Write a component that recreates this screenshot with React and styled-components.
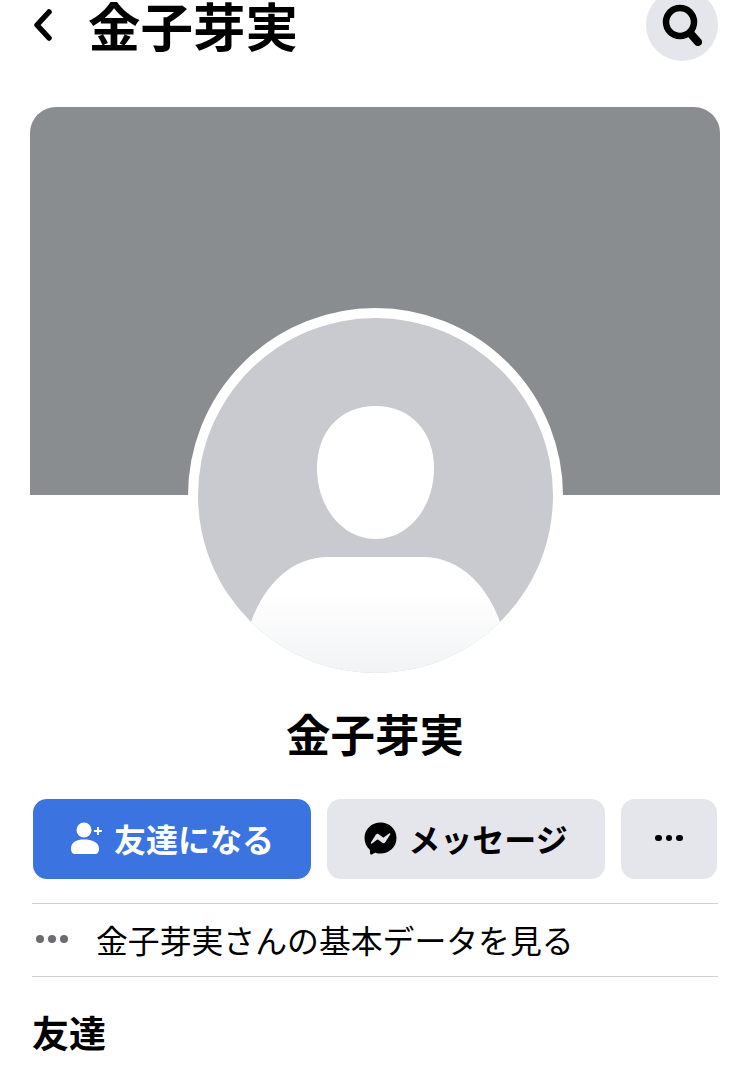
import React from 'react'
import styled, { createGlobalStyle } from 'styled-components'
import { FaFacebookMessenger } from 'react-icons/fa'

const GlobalStyle = createGlobalStyle`
  html, body {
    margin: 0;
    padding: 0;
    background: #fff;
    overflow: hidden;
  }
  body {
    font-family: "Noto Sans CJK JP", "Liberation Sans", sans-serif;
    color: #000;
  }
`

const Page = styled.div`
  width: 750px;
  height: 1084px;
  overflow: hidden;
`
const Header = styled.header`
  display: flex;
  align-items: flex-start;
  height: 61px;
  padding: 0 32px 0 33px;
`
const BackIcon = styled.svg`
  width: 19px;
  height: 32px;
  margin: 9px 36px 0 0;
`
const Title = styled.h1`
  flex: 1;
  margin: -2px 0 0;
  font-size: 52.5px;
  line-height: 52px;
  font-weight: 700;
`
const SearchButton = styled.button`
  display: flex;
  align-items: center;
  justify-content: center;
  width: 72px;
  height: 72px;
  margin-top: -11px;
  padding: 0;
  border: 0;
  border-radius: 50%;
  background: #e4e6eb;
`
const Cover = styled.div`
  height: 388px;
  margin: 46px 30px 0;
  border-radius: 26px 26px 0 0;
  background: #8a8d90;
`
const AvatarRing = styled.div`
  width: 355px;
  height: 355px;
  margin: -187px auto 0;
  border: 10px solid #fff;
  border-radius: 50%;
  background: #fff;
  position: relative;
`
const AvatarArt = styled.svg`
  display: block;
  width: 355px;
  height: 355px;
`
const Name = styled.h2`
  margin: 20px 0 0;
  text-align: center;
  font-size: 44.5px;
  line-height: 60px;
  font-weight: 700;
`
const Actions = styled.div`
  display: flex;
  gap: 16px;
  margin: 36px 33px 0;
`
const ActionButton = styled.button`
  display: flex;
  align-items: center;
  justify-content: center;
  gap: ${({ $gap }) => $gap || 12}px;
  width: ${({ $width }) => $width}px;
  height: 80px;
  padding: 0 0 2px;
  border: 0;
  border-radius: 14px;
  background: ${({ $primary }) => ($primary ? '#3b73e0' : '#e4e6eb')};
  color: ${({ $primary }) => ($primary ? '#fff' : '#000')};
  font-family: inherit;
  font-size: 32px;
  font-weight: 700;
  line-height: 1;
  svg {
    flex: none;
  }
`
const MoreDots = styled.span`
  display: flex;
  gap: 4px;
`
const Dot = styled.i`
  display: block;
  width: ${({ $size }) => $size}px;
  height: ${({ $size }) => $size}px;
  border-radius: 50%;
  background: ${({ $color }) => $color};
`
const InfoRow = styled.div`
  display: flex;
  align-items: center;
  gap: 28px;
  height: 69px;
  margin: 24px 32px 0;
  padding: 0 0 3px 4px;
  border-top: 1px solid #cfcfd1;
  border-bottom: 1px solid #cfcfd1;
  font-size: 31.85px;
  font-weight: 400;
  white-space: nowrap;
`
const InfoDots = styled.span`
  display: flex;
  gap: 4px;
`
const SectionTitle = styled.h3`
  margin: 30px 0 0 32px;
  font-size: 37px;
  line-height: 50px;
  font-weight: 700;
`

function BackChevron() {
  return (
    <BackIcon viewBox="0 0 19 32">
      <path d="M16 3 L4 16 L16 29" fill="none" stroke="#000" strokeWidth="5.5" strokeLinecap="round" strokeLinejoin="round" />
    </BackIcon>
  )
}

function SearchGlyph() {
  return (
    <svg width="40" height="42" viewBox="0 0 40 42">
      <circle cx="18" cy="18" r="14" fill="none" stroke="#000" strokeWidth="6.5" />
      <path d="M28 29 L36 38" stroke="#000" strokeWidth="8" strokeLinecap="round" />
    </svg>
  )
}

function Silhouette() {
  return (
    <AvatarArt viewBox="0 0 355 355">
      <defs>
        <clipPath id="avatarClip">
          <circle cx="177.5" cy="177.5" r="177.5" />
        </clipPath>
        <linearGradient id="bodyFill" x1="0" y1="0" x2="0" y2="1">
          <stop offset="0.3" stopColor="#ffffff" />
          <stop offset="1" stopColor="#f2f3f5" />
        </linearGradient>
        <filter id="soft">
          <feGaussianBlur stdDeviation="0.7" />
        </filter>
      </defs>
      <g clipPath="url(#avatarClip)">
        <rect width="355" height="355" fill="#c9cad0" />
        <path
          d="M177.5 88 C214 88 236 115 236 150 C236 190 210 221 177.5 221 C145 221 119 190 119 150 C119 115 141 88 177.5 88 Z"
          fill="#fff"
          filter="url(#soft)"
        />
        <path
          d="M130 239 L225 239 C262 239 291 268 304 310 L304 355 L51 355 L51 310 C64 268 93 239 130 239 Z"
          fill="url(#bodyFill)"
          filter="url(#soft)"
        />
      </g>
    </AvatarArt>
  )
}

function AddFriendIcon() {
  return (
    <svg width="32" height="32" viewBox="0 0 32 32" fill="#fff">
      <circle cx="14" cy="8" r="7.5" />
      <path d="M1 27 C1 20 6 17.5 14 17.5 C22 17.5 29 20 29 27 C29 30 27.5 32 25 32 L5 32 C2.5 32 1 30 1 27 Z" />
      <path d="M27 5 h2 v3 h3 v2 h-3 v3 h-2 v-3 h-3 v-2 h3 Z" />
    </svg>
  )
}

export default function App() {
  return (
    <Page>
      <GlobalStyle />
      <Header>
        <BackChevron />
        <Title>金子芽実</Title>
        <SearchButton>
          <SearchGlyph />
        </SearchButton>
      </Header>
      <Cover />
      <AvatarRing>
        <Silhouette />
      </AvatarRing>
      <Name>金子芽実</Name>
      <Actions>
        <ActionButton $primary $width={278}>
          <AddFriendIcon />
          友達になる
        </ActionButton>
        <ActionButton $width={278} $gap={11}>
          <FaFacebookMessenger size={33} />
          メッセージ
        </ActionButton>
        <ActionButton $width={96}>
          <MoreDots>
            <Dot $size={6.5} $color="#000" />
            <Dot $size={6.5} $color="#000" />
            <Dot $size={6.5} $color="#000" />
          </MoreDots>
        </ActionButton>
      </Actions>
      <InfoRow>
        <InfoDots>
          <Dot $size={8} $color="#6b6b70" />
          <Dot $size={8} $color="#6b6b70" />
          <Dot $size={8} $color="#6b6b70" />
        </InfoDots>
        金子芽実さんの基本データを見る
      </InfoRow>
      <SectionTitle>友達</SectionTitle>
    </Page>
  )
}
